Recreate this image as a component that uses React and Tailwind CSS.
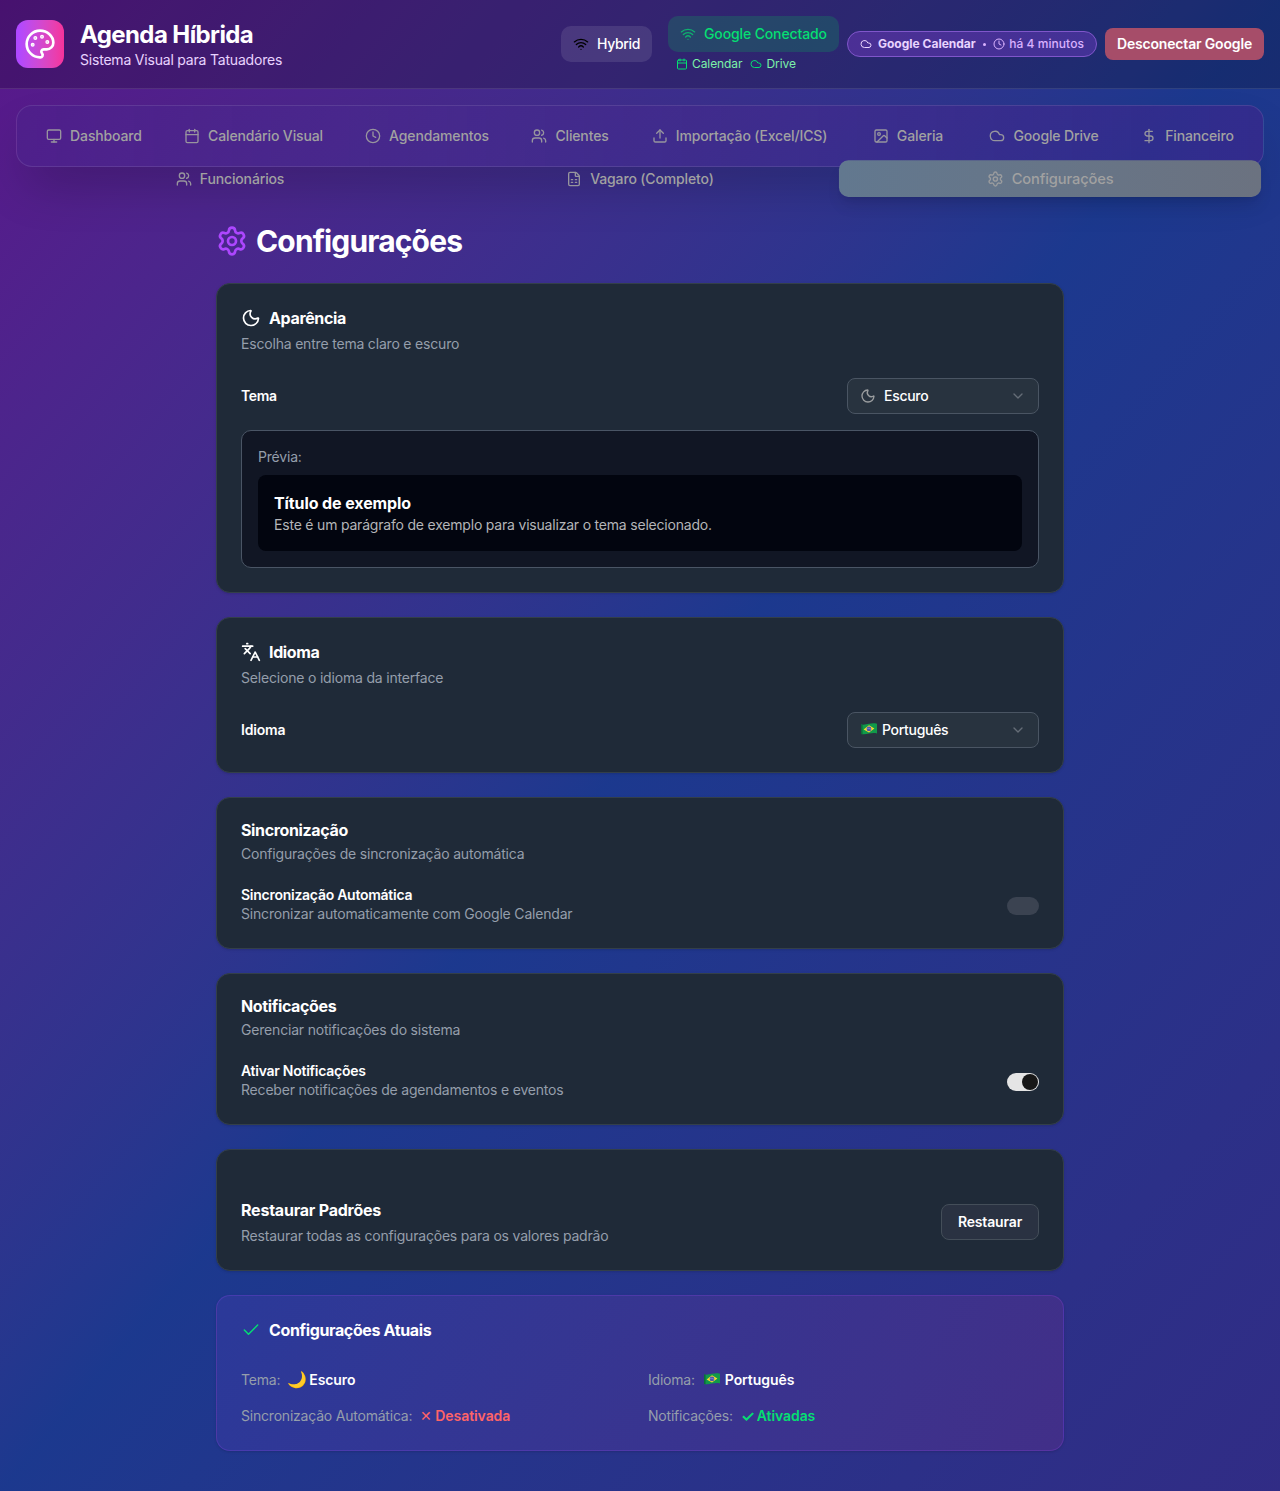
import {
  Calendar, Check, ChevronDown, Clock, Cloud, DollarSign, FileSpreadsheet, Image, Languages,
  Monitor, Moon, Palette, Settings, Upload, Users, Wifi,
} from 'lucide-react'

const primaryTabs = [
  { label: 'Dashboard', icon: Monitor, width: 'w-[130px]' },
  { label: 'Calendário Visual', icon: Calendar, width: 'w-[173px]' },
  { label: 'Agendamentos', icon: Clock, width: 'w-[158px]' },
  { label: 'Clientes', icon: Users, width: 'w-[112px]' },
  { label: 'Importação (Excel/ICS)', icon: Upload, width: 'w-[211px]' },
  { label: 'Galeria', icon: Image, width: 'w-[110px]' },
  { label: 'Google Drive', icon: Cloud, width: 'w-[146px]' },
  { label: 'Financeiro', icon: DollarSign, width: 'w-[125px]' },
]

const secondaryTabs = [
  { label: 'Funcionários', icon: Users },
  { label: 'Vagaro (Completo)', icon: FileSpreadsheet },
  { label: 'Configurações', icon: Settings, active: true },
]

function Tab({ label, icon: Icon, width = 'w-[402px]', active }) {
  return (
    <button
      className={`flex h-[35px] shrink-0 items-center justify-center gap-2 rounded-[9px] text-sm font-medium tracking-[-0.14px] whitespace-nowrap text-[#a1a1a1] ${width} ${
        active ? '-mt-px scale-105 bg-linear-to-r from-[#62788f] to-[#6b7280] shadow-lg' : ''
      }`}
    >
      <Icon className="size-4 opacity-90" />
      {label}
    </button>
  )
}

function BrazilFlag() {
  return (
    <svg viewBox="0 0 16 12" className="h-3 w-4 shrink-0" role="img" aria-label="🇧🇷">
      <path d="M0 1.4C3 2 5 1.4 8 .8s5-.8 8 0v9.6c-3-.8-5-.4-8 .2s-5 1-8 .4z" fill="#11994a" />
      <path d="M0 1.4l1.6.2v9.6L0 11z" fill="#0b6f38" />
      <path d="M2.6 6.6L8 2.2l5.4 3.4L8 9.6z" fill="#f7d92e" />
      <circle cx="8" cy="5.9" r="2.4" fill="#4a55b0" />
      <path d="M5.9 5.4c1.5-.3 3 0 4.2 1" fill="none" stroke="#b9c2e6" strokeWidth=".4" />
    </svg>
  )
}

function Header() {
  return (
    <header className="flex h-[89px] items-center justify-between border-b border-white/10 bg-black/20 px-4">
      <div className="flex items-center gap-4">
        <div className="flex size-12 items-center justify-center rounded-xl bg-linear-to-r from-purple-500 to-pink-500 text-white">
          <Palette className="size-8" />
        </div>
        <div>
          <h1 className="pt-0.5 text-2xl leading-[30px] font-bold tracking-[-0.6px] text-white">Agenda Híbrida</h1>
          <p className="text-sm tracking-[-0.2px] text-purple-200">Sistema Visual para Tatuadores</p>
        </div>
      </div>
      <div className="flex items-center">
        <div className="mr-4 flex h-9 w-[91px] items-center gap-2 rounded-[10px] bg-white/10 px-3 text-sm font-medium tracking-[-0.35px] text-white">
          <Wifi className="size-4 shrink-0 text-black" />
          Hybrid
        </div>
        <div className="mr-2 w-[171px]">
          <div className="flex h-9 items-center gap-2 rounded-[10px] bg-green-500/20 px-3 text-sm font-medium tracking-[-0.13px] whitespace-nowrap text-green-400">
            <Wifi className="size-4 shrink-0 opacity-70" />
            Google Conectado
          </div>
          <div className="mt-1 flex h-4 items-center gap-2 px-2 text-xs tracking-[-0.08px] text-green-300">
            <span className="flex items-center gap-1"><Calendar className="size-3 text-green-400" />Calendar</span>
            <span className="flex items-center gap-1"><Cloud className="size-3 text-green-400" />Drive</span>
          </div>
        </div>
        <div className="mr-2 flex h-[26px] w-[250px] items-center rounded-full border border-[#8056cb] bg-purple-500/25 px-3 text-xs font-medium whitespace-nowrap text-purple-200">
          <Cloud className="mr-1.5 size-3 shrink-0" />
          <span className="font-bold">Google Calendar</span>
          <span className="mx-auto size-[3px] rounded-full bg-purple-300" />
          <Clock className="mr-1 size-3 shrink-0 text-purple-300" />
          <span className="tracking-[0.06px] text-purple-300">há 4 minutos</span>
        </div>
        <button className="h-8 w-[159px] rounded-lg bg-[#a64d69] text-sm font-semibold tracking-[-0.17px] whitespace-nowrap text-white">
          Desconectar Google
        </button>
      </div>
    </header>
  )
}

function Card({ children, className = '' }) {
  return (
    <section className={`rounded-[14px] border border-[#333f49] bg-[#1f2a38] p-6 shadow-sm ${className}`}>
      {children}
    </section>
  )
}

function CardHeader({ title, description, icon: Icon }) {
  return (
    <div className="mb-6">
      <h3 className="flex items-center gap-2 text-base leading-none font-bold tracking-[-0.36px] text-white">
        {Icon && <Icon className="size-5" />}
        {title}
      </h3>
      <p className="mt-1.5 text-sm tracking-[-0.19px] text-[#959eab]">{description}</p>
    </div>
  )
}

function Select({ children }) {
  return (
    <button className="flex h-9 w-48 items-center justify-between rounded-lg border border-[#4a5563] bg-[#28333f] px-3 text-sm font-medium tracking-[-0.3px] text-white">
      <span className="flex items-center">{children}</span>
      <ChevronDown className="size-4 text-[#656d77]" />
    </button>
  )
}

function SwitchRow({ title, description, on }) {
  return (
    <div className="flex items-center justify-between">
      <div>
        <p className="text-sm leading-[14px] font-semibold tracking-[-0.26px] text-white">{title}</p>
        <p className="mt-0.5 text-sm tracking-[-0.19px] text-[#959eab]">{description}</p>
      </div>
      <div className={`flex h-[18px] w-8 items-center rounded-full px-px ${on ? 'justify-end bg-[#e5e5e5]' : 'bg-[#3b4351]'}`}>
        {on && <span className="size-4 rounded-full bg-[#171717]" />}
      </div>
    </div>
  )
}

function Summary({ label, color = 'text-white', children }) {
  return (
    <div className="flex h-5 items-center gap-2 text-sm whitespace-nowrap">
      <span className="tracking-[-0.21px] text-[#959eab]">{label}</span>
      <span className={`flex items-center font-semibold tracking-[-0.07px] ${color}`}>{children}</span>
    </div>
  )
}

export default function App() {
  return (
    <div className="h-[1491px] w-[1280px] overflow-hidden bg-linear-to-br from-purple-900 via-blue-900 to-indigo-900 font-['Inter','Noto_Color_Emoji',sans-serif]">
      <Header />
      <nav className="mx-4 mt-4 h-[62px] rounded-[16px] border border-white/10 bg-linear-to-r from-[#1c398e]/10 to-[#59168b]/35 px-3 pt-[12.5px] shadow-2xl">
        <div className="flex gap-2">
          {primaryTabs.map((tab) => <Tab key={tab.label} {...tab} />)}
        </div>
        <div className="mt-2 flex items-start gap-2">
          {secondaryTabs.map((tab) => <Tab key={tab.label} {...tab} />)}
        </div>
      </nav>

      <main className="mx-auto mt-14 w-[848px]">
        <h2 className="mb-6 flex h-9 items-center gap-2 text-3xl font-bold tracking-[-0.85px] text-white">
          <Settings className="size-8 text-purple-500" />
          Configurações
        </h2>
        <div className="flex flex-col gap-6">
          <Card>
            <CardHeader title="Aparência" description="Escolha entre tema claro e escuro" icon={Moon} />
            <div className="flex items-center justify-between">
              <span className="text-sm font-semibold tracking-[-0.35px] text-white">Tema</span>
              <Select>
                <Moon className="mr-2 size-4 text-[#9a9d9f]" />
                Escuro
              </Select>
            </div>
            <div className="mt-4 rounded-[10px] border border-[#4a5565] bg-[#111624] p-4">
              <p className="mb-2 text-sm tracking-[-0.19px] text-[#959eab]">Prévia:</p>
              <div className="rounded-lg bg-[#02050f] p-4">
                <h4 className="text-base font-bold tracking-[-0.1px] text-white">Título de exemplo</h4>
                <p className="text-sm tracking-[-0.2px] text-[#b4b5b8]">
                  Este é um parágrafo de exemplo para visualizar o tema selecionado.
                </p>
              </div>
            </div>
          </Card>

          <Card>
            <CardHeader title="Idioma" description="Selecione o idioma da interface" icon={Languages} />
            <div className="flex items-center justify-between">
              <span className="text-sm font-semibold tracking-[-0.2px] text-white">Idioma</span>
              <Select>
                <span className="mr-[5px] mb-0.5 ml-px"><BrazilFlag /></span>
                Português
              </Select>
            </div>
          </Card>

          <Card>
            <CardHeader title="Sincronização" description="Configurações de sincronização automática" />
            <SwitchRow title="Sincronização Automática" description="Sincronizar automaticamente com Google Calendar" />
          </Card>

          <Card>
            <CardHeader title="Notificações" description="Gerenciar notificações do sistema" />
            <SwitchRow title="Ativar Notificações" description="Receber notificações de agendamentos e eventos" on />
          </Card>

          <Card className="pt-12">
            <div className="flex items-center justify-between">
              <div>
                <h3 className="text-base font-bold tracking-[-0.22px] text-white">Restaurar Padrões</h3>
                <p className="mt-1 text-sm tracking-[-0.2px] text-[#959eab]">
                  Restaurar todas as configurações para os valores padrão
                </p>
              </div>
              <button className="h-9 w-[98px] rounded-lg border border-[#444e59] bg-[#2a3242] text-sm font-semibold tracking-[-0.15px] text-white">
                Restaurar
              </button>
            </div>
          </Card>

          <section className="rounded-[14px] border border-purple-500/20 bg-linear-to-r from-purple-500/10 to-pink-500/10 p-6 shadow-sm">
            <h3 className="mb-[30px] flex items-center gap-2 text-base leading-5 font-bold tracking-[-0.36px] text-white">
              <Check className="size-5 text-green-400" strokeWidth={1.75} />
              Configurações Atuais
            </h3>
            <div className="grid grid-cols-2 gap-4">
              <Summary label="Tema:"><span className="mb-0.5 -ml-px w-[22px] text-base leading-5">🌙</span>Escuro</Summary>
              <Summary label="Idioma:"><span className="mr-[5px] mb-0.5 ml-px"><BrazilFlag /></span>Português</Summary>
              <Summary label="Sincronização Automática:" color="text-[#ff6467]">
                <span className="w-[15px] font-medium">✕</span>Desativada
              </Summary>
              <Summary label="Notificações:" color="text-green-400">
                <span className="w-4 text-base leading-5 font-semibold">✓</span>Ativadas
              </Summary>
            </div>
          </section>
        </div>
      </main>
    </div>
  )
}
